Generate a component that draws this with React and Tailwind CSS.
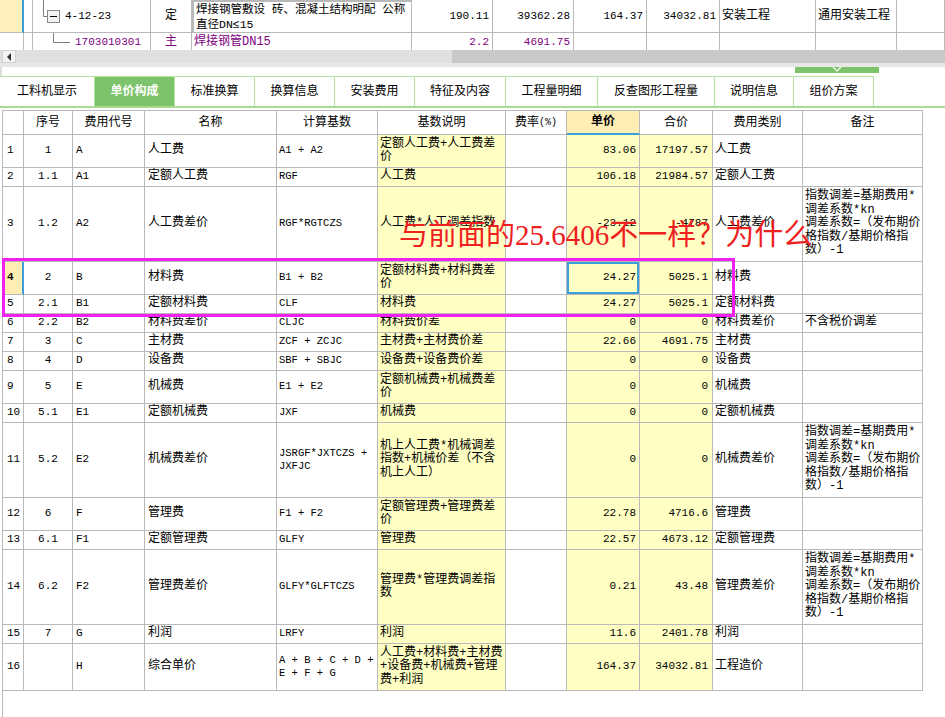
import React from 'react'

const NOTE = ['指数调差=基期费用*', '调差系数*kn', '调差系数=（发布期价', '格指数/基期价格指', '数）-1']

const rows = [
  { n: '1', seq: '1', code: 'A', name: '人工费', base: ['A1 + A2'], desc: ['定额人工费+人工费差', '价'], price: '83.06', total: '17197.57', cat: '人工费', h: 'h-[33px]' },
  { n: '2', seq: '1.1', code: 'A1', name: '定额人工费', base: ['RGF'], desc: ['人工费'], price: '106.18', total: '21984.57', cat: '定额人工费', h: 'h-[19px]' },
  { n: '3', seq: '1.2', code: 'A2', name: '人工费差价', base: ['RGF*RGTCZS'], desc: ['人工费*人工调差指数'], price: '-23.12', total: '-4787', cat: '人工费差价', note: NOTE, h: 'h-[75px]' },
  { n: '4', seq: '2', code: 'B', name: '材料费', base: ['B1 + B2'], desc: ['定额材料费+材料费差', '价'], price: '24.27', total: '5025.1', cat: '材料费', h: 'h-[33px]', selected: true },
  { n: '5', seq: '2.1', code: 'B1', name: '定额材料费', base: ['CLF'], desc: ['材料费'], price: '24.27', total: '5025.1', cat: '定额材料费', h: 'h-[19px]' },
  { n: '6', seq: '2.2', code: 'B2', name: '材料费差价', base: ['CLJC'], desc: ['材料费价差'], price: '0', total: '0', cat: '材料费差价', note: ['不含税价调差'], h: 'h-[19px]' },
  { n: '7', seq: '3', code: 'C', name: '主材费', base: ['ZCF + ZCJC'], desc: ['主材费+主材费价差'], price: '22.66', total: '4691.75', cat: '主材费', h: 'h-[19px]' },
  { n: '8', seq: '4', code: 'D', name: '设备费', base: ['SBF + SBJC'], desc: ['设备费+设备费价差'], price: '0', total: '0', cat: '设备费', h: 'h-[19px]' },
  { n: '9', seq: '5', code: 'E', name: '机械费', base: ['E1 + E2'], desc: ['定额机械费+机械费差', '价'], price: '0', total: '0', cat: '机械费', h: 'h-[33px]' },
  { n: '10', seq: '5.1', code: 'E1', name: '定额机械费', base: ['JXF'], desc: ['机械费'], price: '0', total: '0', cat: '定额机械费', h: 'h-[19px]' },
  { n: '11', seq: '5.2', code: 'E2', name: '机械费差价', base: ['JSRGF*JXTCZS +', 'JXFJC'], desc: ['机上人工费*机械调差', '指数+机械价差（不含', '机上人工）'], price: '0', total: '0', cat: '机械费差价', note: NOTE, h: 'h-[75px]' },
  { n: '12', seq: '6', code: 'F', name: '管理费', base: ['F1 + F2'], desc: ['定额管理费+管理费差', '价'], price: '22.78', total: '4716.6', cat: '管理费', h: 'h-[33px]' },
  { n: '13', seq: '6.1', code: 'F1', name: '定额管理费', base: ['GLFY'], desc: ['管理费'], price: '22.57', total: '4673.12', cat: '定额管理费', h: 'h-[19px]' },
  { n: '14', seq: '6.2', code: 'F2', name: '管理费差价', base: ['GLFY*GLFTCZS'], desc: ['管理费*管理费调差指', '数'], price: '0.21', total: '43.48', cat: '管理费差价', note: NOTE, h: 'h-[75px]' },
  { n: '15', seq: '7', code: 'G', name: '利润', base: ['LRFY'], desc: ['利润'], price: '11.6', total: '2401.78', cat: '利润', h: 'h-[19px]' },
  { n: '16', seq: '', code: 'H', name: '综合单价', base: ['A + B + C + D +', 'E + F + G'], desc: ['人工费+材料费+主材费', '+设备费+机械费+管理', '费+利润'], price: '164.37', total: '34032.81', cat: '工程造价', h: 'h-[47px]' }
]

const tabs = [
  { label: '工料机显示', w: 'w-[95px]' },
  { label: '单价构成', w: 'w-[80px]', active: true },
  { label: '标准换算', w: 'w-[80px]' },
  { label: '换算信息', w: 'w-[80px]' },
  { label: '安装费用', w: 'w-[80px]' },
  { label: '特征及内容', w: 'w-[91px]' },
  { label: '工程量明细', w: 'w-[92px]' },
  { label: '反查图形工程量', w: 'w-[117px]' },
  { label: '说明信息', w: 'w-[79px]' },
  { label: '组价方案', w: 'w-[80px]' }
]

const cols = 'grid grid-cols-[21px_49px_72px_132px_101px_128px_61px_73px_73px_90px_120px]'
const topCols = 'grid grid-cols-[24px_9px_118px_41px_220px_81px_81px_73px_73px_96px_81px_48px]'

function Cell({ className = '', children }) {
  return (
    <div className={`flex items-center overflow-hidden whitespace-nowrap border-r border-b border-[#b9b9b9] ${className}`}>
      {children}
    </div>
  )
}

function Lines({ lines, className = '' }) {
  return (
    <div className={className}>
      {lines.map((l, i) => (
        <div key={i}>{l}</div>
      ))}
    </div>
  )
}

function TopGrid() {
  return (
    <div className="h-[50px] overflow-hidden">
      <div className={`${topCols} h-[33px]`}>
        <div className="bg-[#fff0c0] border-r-2 border-[#3ba0d8] border-b border-b-[#b9b9b9]" />
        <Cell />
        <Cell className="relative">
          <svg className="absolute left-0 top-0" width="40" height="33">
            <path d="M10.5 0 V16.5 H14" stroke="#808080" fill="none" />
            <rect x="14.5" y="10.5" width="12" height="12" fill="#f2f2f2" stroke="#8a8a8a" />
            <path d="M17 16.5 H24" stroke="#000" />
          </svg>
          <span className="pl-[32px] text-[11px]">4-12-23</span>
        </Cell>
        <Cell className="justify-center">定</Cell>
        <Cell className="border-2 border-[#7a7a7a] px-[2px] leading-[15px] text-[11.5px]">
          <Lines lines={['焊接钢管敷设 砖、混凝土结构明配 公称', '直径DN≤15']} />
        </Cell>
        <Cell className="justify-end pr-[3px] text-[11px]">190.11</Cell>
        <Cell className="justify-end pr-[3px] text-[11px]">39362.28</Cell>
        <Cell className="justify-end pr-[3px] text-[11px]">164.37</Cell>
        <Cell className="justify-end pr-[3px] text-[11px]">34032.81</Cell>
        <Cell className="pl-[2px]">安装工程</Cell>
        <Cell className="pl-[2px]">通用安装工程</Cell>
        <Cell />
      </div>
      <div className={`${topCols} h-[19px] text-[#800080]`}>
        <Cell />
        <Cell />
        <Cell className="relative">
          <svg className="absolute left-0 top-0" width="40" height="19">
            <path d="M20.5 0 V9.5 H37" stroke="#808080" fill="none" />
          </svg>
          <span className="pl-[42px] text-[11px]">1703010301</span>
        </Cell>
        <Cell className="justify-center">主</Cell>
        <Cell className="pl-[2px]">焊接钢管DN15</Cell>
        <Cell className="justify-end pr-[3px] text-[11px]">2.2</Cell>
        <Cell className="justify-end pr-[3px] text-[11px]">4691.75</Cell>
        <Cell />
        <Cell />
        <Cell />
        <Cell />
        <Cell />
      </div>
    </div>
  )
}

function Header() {
  return (
    <div className={`${cols} h-[25px]`}>
      <Cell className="border-t" />
      <Cell className="border-t justify-center">序号</Cell>
      <Cell className="border-t justify-center">费用代号</Cell>
      <Cell className="border-t justify-center">名称</Cell>
      <Cell className="border-t justify-center">计算基数</Cell>
      <Cell className="border-t justify-center">基数说明</Cell>
      <Cell className="border-t justify-center">
        费率<span className="text-[10px]">(%)</span>
      </Cell>
      <Cell className="border-t justify-center bg-[#ffeeb4] font-bold border-b-2 border-b-[#3ba0d8]">单价</Cell>
      <Cell className="border-t justify-center">合价</Cell>
      <Cell className="border-t justify-center">费用类别</Cell>
      <Cell className="border-t justify-center">备注</Cell>
    </div>
  )
}

function Row({ r }) {
  return (
    <div className={`${cols} ${r.h} leading-[13.5px]`}>
      {r.selected ? (
        <div className="flex items-center pl-[4px] text-[11px] font-bold bg-[#ffeeb4] border-b border-b-[#b9b9b9] border-r-2 border-r-[#3ba0d8]">
          {r.n}
        </div>
      ) : (
        <Cell className="pl-[4px] text-[11px]">{r.n}</Cell>
      )}
      <Cell className="justify-center text-[11px]">{r.seq}</Cell>
      <Cell className="pl-[3px] text-[11px]">{r.code}</Cell>
      <Cell className="pl-[3px]">{r.name}</Cell>
      <Cell className="pl-[2px] text-[10.5px]">
        <Lines lines={r.base} />
      </Cell>
      <Cell className="pl-[2px] bg-[#ffffc4]">
        <Lines lines={r.desc} />
      </Cell>
      <Cell />
      <Cell
        className={`justify-end pr-[3px] text-[11px] bg-[#ffffc4] ${r.selected ? 'shadow-[inset_0_0_0_2px_#3ba0d8]' : ''}`}
      >
        {r.price}
      </Cell>
      <Cell className="justify-end pr-[4px] text-[11px] bg-[#ffffc4]">{r.total}</Cell>
      <Cell className="pl-[2px]">{r.cat}</Cell>
      <Cell className="pl-[2px]">{r.note && <Lines lines={r.note} />}</Cell>
    </div>
  )
}

export default function App() {
  return (
    <div className="relative w-[945px] h-[717px] overflow-hidden bg-white text-black text-[12px] font-['Liberation_Mono','Noto_Sans_CJK_SC',monospace]">
      <TopGrid />

      {/* horizontal scrollbar */}
      <div className="flex h-[13px] bg-[#e0e0e0]">
        <div className="ml-[2px] w-[14px] flex items-center justify-center bg-[#f3f3f3] border border-[#d2d2d2]">
          <svg width="5" height="8">
            <path d="M4 0 L0 4 L4 8 Z" fill="#333" />
          </svg>
        </div>
        <div className="w-[436px]" />
        <div className="flex-1 bg-[#c9c9c9]" />
      </div>
      <div className="h-[4px] bg-[#e7e7e7]" />

      <div className="h-[9px] flex border-l-2 border-[#dedede]">
        <div className="ml-[793px] w-[84px] h-[6px] bg-[#7dc36b] flex justify-center">
          <svg width="10" height="6">
            <path d="M1 0 L5 4 L9 0" stroke="#fff" fill="none" strokeWidth="1.2" />
          </svg>
        </div>
      </div>

      {/* tabs */}
      <div className="flex h-[32px] border-b-2 border-[#a9dc92]">
        {tabs.map((t) => (
          <div
            key={t.label}
            className={`${t.w} flex items-center justify-center border-t border-r border-[#b4e4a0] ${
              t.active ? 'bg-[#7dc36b] text-white font-bold border-[#7dc36b]' : 'bg-white'
            }`}
          >
            {t.label}
          </div>
        ))}
      </div>

      <div className="ml-[2px] mt-[2px] h-[609px] border-l border-[#b9b9b9]">
        <Header />
        {rows.map((r) => (
          <Row key={r.n} r={r} />
        ))}
      </div>

      {/* annotation overlay */}
      <div className="absolute left-[2px] top-[258px] w-[733px] h-[59px] border-[3px] border-[#f020f0]" />
      <div className="absolute left-[399px] top-[220px] text-[29px] leading-[31px] text-[#ee2020] whitespace-nowrap font-['Liberation_Serif','Noto_Sans_CJK_SC',serif]">
        与前面的25.6406不一样？为什么
      </div>
    </div>
  )
}
